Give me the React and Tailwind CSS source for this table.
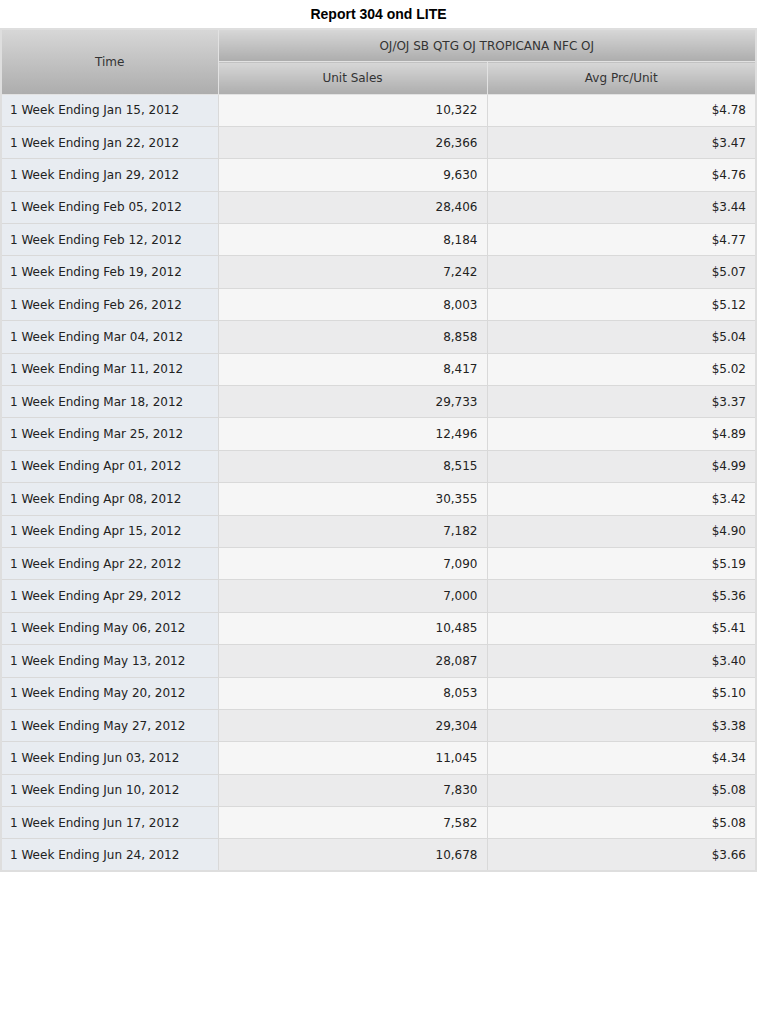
import React from "react";

const rows = [
  ["Jan 15, 2012", "10,322", "$4.78"],
  ["Jan 22, 2012", "26,366", "$3.47"],
  ["Jan 29, 2012", "9,630", "$4.76"],
  ["Feb 05, 2012", "28,406", "$3.44"],
  ["Feb 12, 2012", "8,184", "$4.77"],
  ["Feb 19, 2012", "7,242", "$5.07"],
  ["Feb 26, 2012", "8,003", "$5.12"],
  ["Mar 04, 2012", "8,858", "$5.04"],
  ["Mar 11, 2012", "8,417", "$5.02"],
  ["Mar 18, 2012", "29,733", "$3.37"],
  ["Mar 25, 2012", "12,496", "$4.89"],
  ["Apr 01, 2012", "8,515", "$4.99"],
  ["Apr 08, 2012", "30,355", "$3.42"],
  ["Apr 15, 2012", "7,182", "$4.90"],
  ["Apr 22, 2012", "7,090", "$5.19"],
  ["Apr 29, 2012", "7,000", "$5.36"],
  ["May 06, 2012", "10,485", "$5.41"],
  ["May 13, 2012", "28,087", "$3.40"],
  ["May 20, 2012", "8,053", "$5.10"],
  ["May 27, 2012", "29,304", "$3.38"],
  ["Jun 03, 2012", "11,045", "$4.34"],
  ["Jun 10, 2012", "7,830", "$5.08"],
  ["Jun 17, 2012", "7,582", "$5.08"],
  ["Jun 24, 2012", "10,678", "$3.66"],
];

const head = "bg-gradient-to-b from-[#d7d7d7] to-[#adadad] border border-[#e2e2e2] font-normal text-[#333]";

export default function App() {
  return (
    <div className="w-[757px] bg-white font-['DejaVu_Sans',sans-serif] text-[12px] text-[#222]">
      <div className="h-[28px] flex items-center justify-center font-['Liberation_Sans',Arial,sans-serif] font-bold text-[14px] text-black">
        Report 304 ond LITE
      </div>
      <table className="w-[757px] table-fixed border-collapse border-2 border-[#dedede]">
        <colgroup>
          <col className="w-[217px]" />
          <col className="w-[269px]" />
          <col />
        </colgroup>
        <thead>
          <tr className="h-[32.5px]">
            <th rowSpan={2} className={head}>Time</th>
            <th colSpan={2} className={head}>OJ/OJ SB QTG OJ TROPICANA NFC OJ</th>
          </tr>
          <tr className="h-[32.5px]">
            <th className={head}>Unit Sales</th>
            <th className={head}>Avg Prc/Unit</th>
          </tr>
        </thead>
        <tbody>
          {rows.map(([date, units, price], i) => {
            const cell = i % 2 === 0 ? "bg-[#f6f6f6]" : "bg-[#ebebec]";
            return (
              <tr key={date} className="h-[32.4px]">
                <td className="bg-[#e8ecf1] border border-[#d9d9d9] pl-2 whitespace-nowrap">
                  1 Week Ending {date}
                </td>
                <td className={`${cell} border border-[#d9d9d9] text-right pr-[9px]`}>{units}</td>
                <td className={`${cell} border border-[#d9d9d9] text-right pr-[9px]`}>{price}</td>
              </tr>
            );
          })}
        </tbody>
      </table>
    </div>
  );
}
